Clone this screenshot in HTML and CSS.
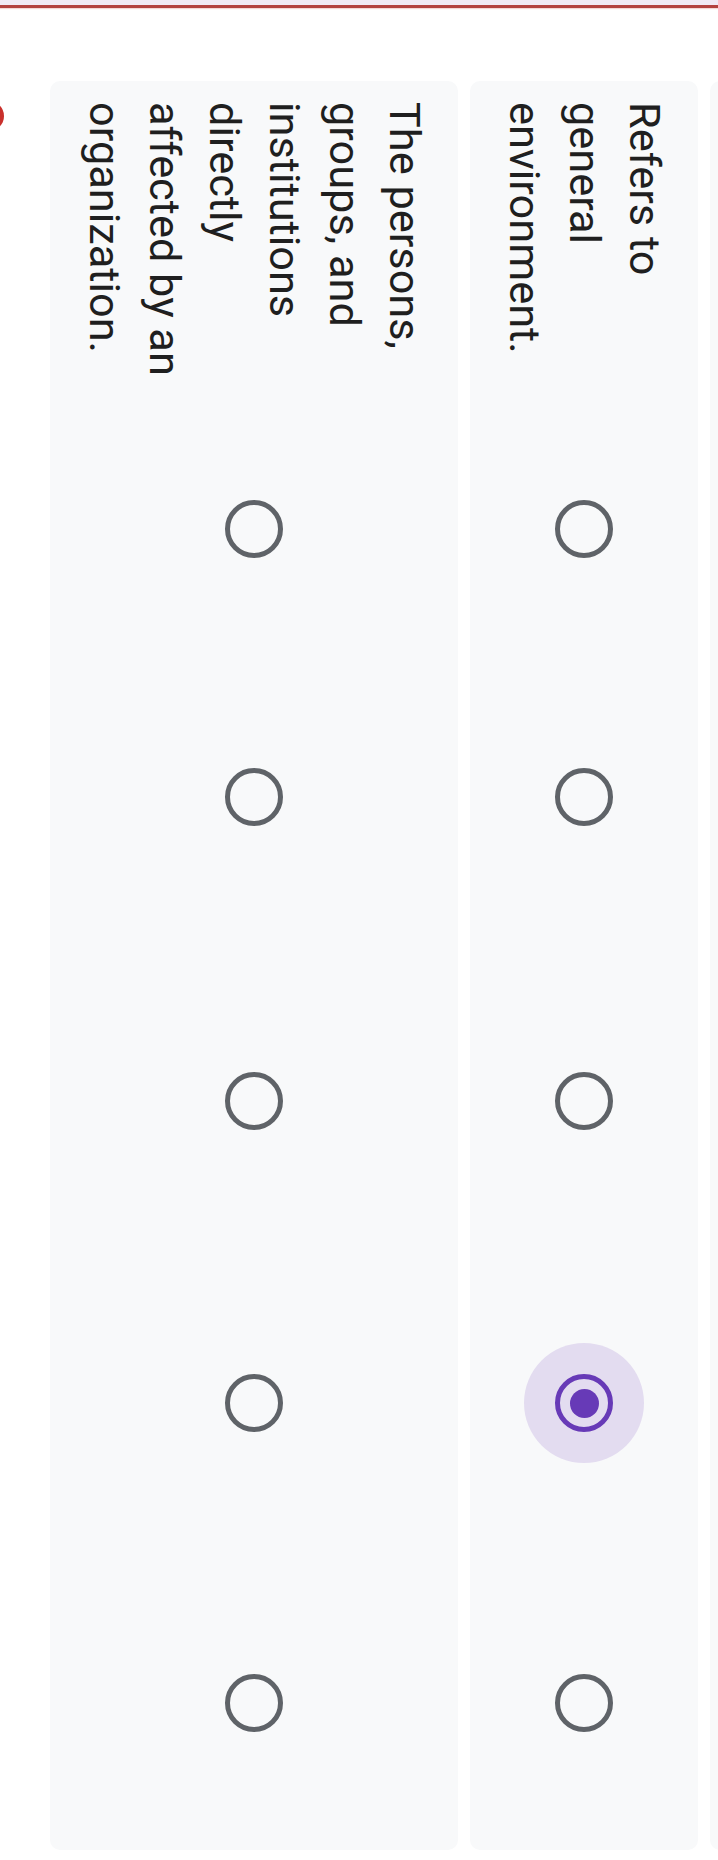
FILE: index.html
```html
<!DOCTYPE html>
<html lang="en">
<head>
<meta charset="utf-8">
<title>Grid question</title>
<link rel="stylesheet" href="styles.css">
</head>
<body>
  <div class="topbar"></div>
  <div class="grid">
    <div class="row-card row-peek"></div>
    <div class="row-card">
      <div class="label">Refers to general environment.</div>
      <div class="options">
        <span class="radio r1"></span>
        <span class="radio r2"></span>
        <span class="radio r3"></span>
        <span class="radio r4 checked"></span>
        <span class="radio r5"></span>
      </div>
    </div>
    <div class="row-card">
      <div class="label">The persons, groups, and institutions directly affected by an organization.</div>
      <div class="options">
        <span class="radio r1"></span>
        <span class="radio r2"></span>
        <span class="radio r3"></span>
        <span class="radio r4"></span>
        <span class="radio r5"></span>
      </div>
    </div>
    <div class="err-col"><span class="err-icon"></span></div>
  </div>
</body>
</html>
```

FILE: styles.css
```css
html, body {
  margin: 0;
  padding: 0;
}
body {
  width: 718px;
  height: 1860px;
  overflow: hidden;
  background: #ffffff;
  font-family: Roboto, "Noto Sans", Arial, sans-serif;
  color: #202124;
}
.topbar {
  height: 5px;
  background: #f1e9f4;
  border-bottom: 3px solid #b3423f;
  box-shadow: 0 1px 1px #f3d6d4;
}
.grid {
  margin-top: 73px;
  height: 1769px;
  display: flex;
  flex-direction: row-reverse;
  justify-content: flex-start;
  align-items: stretch;
  gap: 12px;
}
.row-card {
  flex: none;
  background: #f8f9fa;
  border-radius: 10px;
  display: flex;
  flex-direction: column;
  align-items: center;
}
.row-peek {
  width: 20px;
  margin-right: -12px;
}
.label {
  writing-mode: vertical-rl;
  height: 286px;
  padding: 21px 24px 0 24px;
  font-size: 43.3px;
  line-height: 60px;
  color: #1f1f1f;
  align-self: stretch;
}
.options {
  display: flex;
  flex-direction: column;
  align-items: center;
  padding-top: 112px;
}
.radio {
  display: block;
  box-sizing: border-box;
  width: 58px;
  height: 58px;
  border: 5.5px solid #5f6368;
  border-radius: 50%;
  position: relative;
}
.r2 { margin-top: 210px; }
.r3 { margin-top: 246px; }
.r4 { margin-top: 244px; }
.r5 { margin-top: 242px; }
.radio.checked {
  border-color: #673ab7;
  background: #e3dcf0;
  box-shadow: 0 0 0 31px #e3dcf0;
}
.radio.checked::after {
  content: "";
  position: absolute;
  left: 50%;
  top: 50%;
  width: 29px;
  height: 29px;
  margin: -14.5px 0 0 -14.5px;
  border-radius: 50%;
  background: #673ab7;
}
.err-col {
  flex: 1;
  position: relative;
}
.err-icon {
  display: block;
  width: 30px;
  height: 30px;
  margin: 20px 0 0 -26px;
  border-radius: 50%;
  background: #c9302c;
}
```
